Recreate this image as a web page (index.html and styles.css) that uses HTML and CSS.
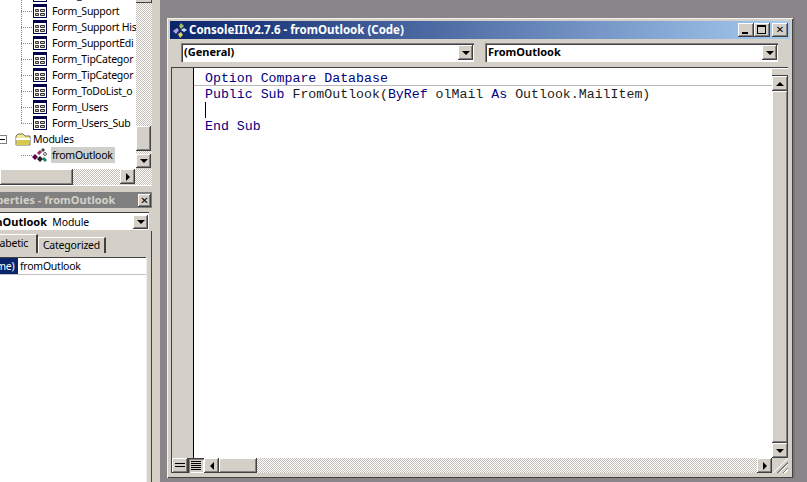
FILE: index.html
```html
<!DOCTYPE html>
<html lang="en">
<head>
<meta charset="utf-8">
<title>ConsoleIIIv2.7.6 - fromOutlook (Code)</title>
<link rel="stylesheet" href="styles.css">
</head>
<body>
<svg class="defs" width="0" height="0" aria-hidden="true">
  <symbol id="form" viewBox="0 0 14 14">
    <rect x="0.5" y="0.5" width="13" height="13" fill="#fff" stroke="#000048"/>
    <rect x="1" y="1" width="12" height="2" fill="#000048"/>
    <path d="M2.5 5.5h3v2h-3zM2.5 9.5h3v2h-3zM7.5 5.5h4v2h-4zM7.5 9.5h4v2h-4z" fill="#d4d0c8" stroke="#333" stroke-width="1"/>
  </symbol>
  <symbol id="module" viewBox="0 0 16 14">
    <path d="M0 9l3-3 3 3-3 3z" fill="#600050"/>
    <path d="M5 5l3-3 2 2-3 3z" fill="#a02070"/>
    <path d="M9 2l2-2 2 2-2 2z" fill="#404040"/>
    <path d="M5 11l3-3 3 3-3 3z" fill="#202020"/>
    <path d="M10 11l2-2 3 3-2 2z" fill="#208070"/>
    <path d="M11 6l2-2 2 2-2 2z" fill="#c0c0c0" stroke="#303030" stroke-width=".6"/>
  </symbol>
  <symbol id="folder" viewBox="0 0 16 13">
    <path d="M1 3l2-2h5l2 2h5v9H1z" fill="#f0e890" stroke="#707060"/>
    <path d="M1 5h14v2H1z" fill="#fff"/>
    <path d="M3 7h12l-1 5H1z" fill="#d8c850"/>
  </symbol>
  <symbol id="logo" viewBox="0 0 16 16">
    <path d="M9 1l3 3-3 3-2-3z" fill="#a0c060"/>
    <path d="M1 9l4-3 2 2-3 4z" fill="#b0a0e0"/>
    <path d="M9 8l3-2 3 2-3 2z" fill="#d0e0f0"/>
    <path d="M6 12l3-2 2 3-3 3z" fill="#d8d060"/>
  </symbol>
</svg>

<div class="desk">
  <aside class="side">
    <section class="project">
      <div class="tree-row-area">
        <div class="tree">
          <div class="spine"></div>
          <div class="row"><span class="hook"></span><svg class="ico"><use href="#form"/></svg><span class="lbl">Form_</span></div>
          <div class="row"><span class="hook"></span><svg class="ico"><use href="#form"/></svg><span class="lbl">Form_Support</span></div>
          <div class="row"><span class="hook"></span><svg class="ico"><use href="#form"/></svg><span class="lbl">Form_Support His</span></div>
          <div class="row"><span class="hook"></span><svg class="ico"><use href="#form"/></svg><span class="lbl">Form_SupportEdi</span></div>
          <div class="row"><span class="hook"></span><svg class="ico"><use href="#form"/></svg><span class="lbl">Form_TipCategor</span></div>
          <div class="row"><span class="hook"></span><svg class="ico"><use href="#form"/></svg><span class="lbl">Form_TipCategor</span></div>
          <div class="row"><span class="hook"></span><svg class="ico"><use href="#form"/></svg><span class="lbl">Form_ToDoList_o</span></div>
          <div class="row"><span class="hook"></span><svg class="ico"><use href="#form"/></svg><span class="lbl">Form_Users</span></div>
          <div class="row"><span class="hook"></span><svg class="ico"><use href="#form"/></svg><span class="lbl">Form_Users_Sub</span></div>
          <div class="row row-modules"><span class="minus"></span><svg class="ico-folder"><use href="#folder"/></svg><span class="lbl">Modules</span></div>
          <div class="row"><span class="hook"></span><svg class="ico-mod"><use href="#module"/></svg><span class="lbl sel">fromOutlook</span></div>
        </div>
        <div class="vbar">
          <div class="raised vtop"></div>
          <div class="dither grow"></div>
          <div class="raised vthumb"></div>
          <div class="dither gap"></div>
          <div class="raised sbtn"><span class="arr down"></span></div>
        </div>
      </div>
      <div class="hbar">
        <div class="raised hthumb"></div>
        <div class="dither grow"></div>
        <div class="raised sbtn"><span class="arr right"></span></div>
        <div class="dither hcorner"></div>
      </div>
    </section>

    <section class="props">
      <div class="ptitle"><span class="ptext">Properties - fromOutlook</span><span class="raised pclose">✕</span></div>
      <div class="pcombo"><span class="pcombo-text"><b>fromOutlook</b>&nbsp; Module</span><span class="raised sbtn"><span class="arr down"></span></span></div>
      <div class="pbody">
        <div class="tabs">
          <span class="tab active"><span class="tab-clip">Alphabetic</span></span>
          <span class="tab">Categorized</span>
        </div>
        <div class="grid">
          <div class="grow-row"><span class="gname"><span class="gname-text">(Name)</span></span><span class="gval">fromOutlook</span></div>
        </div>
      </div>
    </section>
  </aside>

  <main class="mdi">
    <div class="win">
      <header class="wtitle">
        <svg class="logo"><use href="#logo"/></svg>
        <span class="wtext">ConsoleIIIv2.7.6 - fromOutlook (Code)</span>
        <span class="wbtns">
          <span class="raised wbtn"><span class="g-min"></span></span>
          <span class="raised wbtn"><span class="g-max"></span></span>
          <span class="raised wbtn wclose">✕</span>
        </span>
      </header>
      <div class="combos">
        <div class="combo"><span class="ctext">(General)</span><span class="raised sbtn"><span class="arr down"></span></span></div>
        <div class="combo"><span class="ctext">FromOutlook</span><span class="raised sbtn"><span class="arr down"></span></span></div>
      </div>
      <div class="editor">
        <div class="upper">
          <div class="margin"></div>
          <div class="code">
            <div class="line sep"><span class="kw">Option Compare Database</span></div>
            <div class="line"><span class="kw">Public Sub</span> FromOutlook(<span class="kw">ByRef</span> olMail <span class="kw">As</span> Outlook.MailItem)</div>
            <div class="line"><span class="caret"></span></div>
            <div class="line"><span class="kw">End Sub</span></div>
          </div>
          <div class="vbar2">
            <div class="splitter"></div>
            <div class="raised sbtn2"><span class="arr up"></span></div>
            <div class="dither-plain grow"></div>
            <div class="raised sbtn2"><span class="arr down"></span></div>
          </div>
        </div>
        <div class="lower">
          <div class="raised view"><span class="g-lines short"></span></div>
          <div class="pressed view"><span class="g-lines"></span></div>
          <div class="raised sbtn3"><span class="arr left"></span></div>
          <div class="raised hthumb2"></div>
          <div class="dither grow"></div>
          <div class="raised sbtn3"><span class="arr right"></span></div>
          <div class="grip"></div>
        </div>
      </div>
    </div>
  </main>
</div>
</body>
</html>
```

FILE: styles.css
```css
* { box-sizing: border-box; }
html, body { margin: 0; padding: 0; width: 807px; height: 482px; overflow: hidden; }
body { background: #d4d0c8; font: 11px "Noto Sans", "Liberation Sans", Arial, sans-serif; color: #000; }
.defs { position: absolute; }

.raised {
  background: #d4d0c8;
  box-shadow: inset -1px -1px #404040, inset 1px 1px #fff, inset -2px -2px #808080, inset 2px 2px #d4d0c8;
}
.pressed {
  background: #d4d0c8;
  box-shadow: inset 1px 1px #404040, inset 2px 2px #808080, inset -1px -1px #fff;
}
.dither {
  background-color: #fff;
  background-image: conic-gradient(#c4c0b8 25%, #fff 0 50%, #c4c0b8 0 75%, #fff 0);
  background-size: 2px 2px;
}
.dither-plain { background: #d4d0c8; }
.grow { flex: 1 1 0; min-width: 0; min-height: 0; }

.arr { width: 0; height: 0; border-style: solid; border-color: transparent; display: block; }
.arr.down { border-width: 4px 4px 0; border-top-color: #000; }
.arr.up { border-width: 0 4px 4px; border-bottom-color: #000; }
.arr.left { border-width: 4px 4px 4px 0; border-right-color: #000; }
.arr.right { border-width: 4px 0 4px 4px; border-left-color: #000; }

.desk { display: flex; width: 807px; height: 482px; }

/* Left column */
.side { width: 160px; flex: none; padding-right: 8px; background: #d4d0c8; display: flex; flex-direction: column; }
.project { height: 186px; flex: none; display: flex; flex-direction: column; border-bottom: 1px solid #fff; }
.tree-row-area { height: 169px; flex: none; display: flex; background: #d4d0c8; overflow: hidden; }
.tree { width: 136px; height: 182px; flex: none; position: relative; overflow: hidden; background: #fff; margin-top: -13px; font-size: 10.5px; letter-spacing: -.25px; }
.spine { position: absolute; left: 21px; top: 0; height: 136px; border-left: 1px dotted #808080; }
.row { height: 16px; display: flex; align-items: center; position: relative; white-space: nowrap; padding-left: 21px; }
.hook { width: 11px; flex: none; border-top: 1px dotted #808080; }
.ico { width: 14px; height: 14px; margin-left: 1px; margin-right: 5px; flex: none; }
.ico-mod { width: 16px; height: 14px; flex: none; margin-right: 3px; }
.ico-folder { width: 16px; height: 13px; flex: none; margin-right: 2px; }
.lbl { display: block; line-height: 16px; }
.sel { background: #cfcfcb; padding: 0 2px 0 1px; height: 16px; }
.row-modules { padding-left: 0; }
.minus { width: 7px; height: 9px; flex: none; border: 1px solid #808080; border-left: 0; margin-right: 8px; position: relative; }
.minus::after { content: ""; position: absolute; left: 0; right: 1px; top: 3px; border-top: 1px solid #000; }

.vbar { width: 16px; height: 168px; flex: none; display: flex; flex-direction: column; }
.vtop { height: 3px; flex: none; box-shadow: inset -1px -1px #404040; }
.vthumb { height: 25px; width: 15px; flex: none; }
.vbar .gap { height: 3px; flex: none; }
.vbar .sbtn { height: 14px; }
.sbtn { width: 15px; height: 14px; display: flex; align-items: center; justify-content: center; flex: none; }
.hbar { height: 16px; flex: none; display: flex; background: #d4d0c8; }
.hthumb { width: 73px; flex: none; }
.hcorner { width: 17px; flex: none; }
.hbar .sbtn { height: 15px; }

/* Properties */
.props { display: flex; flex-direction: column; flex: 1; min-height: 0; }
.ptitle { margin-top: 6px; height: 16px; background: #808080; color: #d4d0c8; font-weight: 700; font-size: 11px; line-height: 15px; display: flex; justify-content: space-between; align-items: center; width: 152px; overflow: hidden; padding-right: 1px; }
.ptext { margin-left: -22px; white-space: nowrap; padding-bottom: 1px; }
.pclose { width: 13px; height: 13px; flex: none; font-size: 10px; line-height: 13px; text-align: center; color: #000; font-weight: 700; font-family: "DejaVu Sans", sans-serif; }
.pcombo { margin-top: 4px; height: 19px; width: 149px; background: #fff; display: flex; justify-content: space-between; align-items: center; padding-right: 1px; overflow: hidden; box-shadow: inset 0 1px #404040, inset 0 -1px #d4d0c8; }
.pcombo-text { margin-left: -24px; white-space: nowrap; font-size: 10.5px; letter-spacing: -.1px; }
.pcombo-text b { font-size: 11px; letter-spacing: 0; }
.pbody { flex: 1; min-height: 0; display: flex; flex-direction: column; width: 152px; border-right: 1px solid #404040; }
.tabs { height: 26px; flex: none; display: flex; align-items: flex-end; padding-bottom: 4px; }
.tab { height: 16px; width: 68px; flex: none; text-align: center; line-height: 14px; border: 1px solid #808080; border-bottom: 0; border-left-color: #fff; border-top-color: #fff; border-right: 2px solid #404040; font-size: 10.5px; letter-spacing: -.2px; }
.tab.active { height: 19px; width: 38px; line-height: 17px; overflow: hidden; border-left: 0; text-align: left; }
.tab-clip { margin-left: -22px; white-space: nowrap; display: block; }
.grid { width: 147px; flex: 1; min-height: 0; background: #fff; box-shadow: inset 0 1px #404040; border-right: 1px solid #f0f0f0; overflow: hidden; }
.grow-row { display: flex; height: 17px; margin-top: 1px; align-items: stretch; font-size: 10.5px; letter-spacing: -.25px; border-bottom: 1px solid #c0c0c0; }
.gname { width: 18px; flex: none; background: #0a246a; color: #fff; overflow: hidden; line-height: 16px; }
.gname-text { display: block; margin-left: -20px; white-space: nowrap; }
.gval { padding-left: 2px; line-height: 16px; }

/* MDI */
.mdi { flex: 1; background: #8a8589; position: relative; }
.win { position: absolute; left: 7px; top: 18px; width: 626px; height: 460px; background: #d4d0c8; padding: 3px; display: flex; flex-direction: column; box-shadow: inset 1px 1px #f4f2ee, inset -1px -1px #404040, 2px 0 0 #77747a; }
.wtitle { height: 18px; flex: none; display: flex; align-items: center; background: linear-gradient(90deg, #0a246a, #a6caf0); color: #fff; font-weight: 700; font-size: 11.5px; padding: 0 2px; }
.logo { width: 16px; height: 16px; flex: none; margin-right: 1px; }
.wtext { flex: 1; white-space: nowrap; padding-bottom: 1px; }
.wbtns { display: flex; }
.wbtn { width: 16px; height: 14px; position: relative; color: #000; font-size: 10px; line-height: 14px; text-align: center; font-family: "DejaVu Sans", sans-serif; }
.wbtn.wclose { margin-left: 2px; font-weight: 700; }
.g-min { position: absolute; left: 4px; bottom: 3px; width: 6px; height: 2px; background: #000; }
.g-max { position: absolute; left: 3px; top: 2px; width: 9px; height: 9px; border: 1px solid #000; border-top-width: 2px; }

.combos { display: flex; height: 28px; flex: none; padding: 4px 9px 5px 11px; gap: 11px; }
.combo { width: 293px; height: 19px; flex: none; background: #fff; display: flex; align-items: center; justify-content: space-between; padding: 2px 1px 2px 2px; box-shadow: inset 1px 1px #808080, inset 2px 2px #404040, inset -1px -1px #fff; font-weight: 700; font-size: 11px; }
.ctext { margin-left: 1px; white-space: nowrap; padding-bottom: 2px; }
.combo .sbtn { height: 15px; }

.editor { flex: 1; min-height: 0; display: flex; flex-direction: column; margin: 0 2px 2px 1px; box-shadow: inset 1px 1px #404040; }
.upper { flex: 1; min-height: 0; display: flex; padding-top: 1px; }
.margin { width: 21px; flex: none; background: #d4d0c8; margin-left: 1px; }
.code { flex: 1; min-width: 0; background: #fff; border-left: 1px solid #000; font: 13.25px/18px "Liberation Mono", "Courier New", monospace; color: #1c1c1c; padding-top: 2px; }
.line { height: 16px; padding-left: 11px; white-space: pre; }
.line.sep { border-bottom: 1px solid #b8b8b8; }
.kw { color: #000080; }
.caret { display: block; width: 1px; height: 16px; background: #000; }
.vbar2 { width: 16px; flex: none; display: flex; flex-direction: column; background: #d4d0c8; }
.splitter { height: 8px; flex: none; background: #d4d0c8; box-shadow: inset 0 -1px #404040, inset 0 1px #fff; }
.sbtn2 { height: 15px; width: 16px; flex: none; display: flex; align-items: center; justify-content: center; }
.vbar2 .dither-plain { box-shadow: inset -1px -1px #404040, inset 1px 1px #fff, inset -2px -2px #808080; }

.lower { height: 15px; flex: none; display: flex; padding-left: 1px; }
.view { width: 16px; flex: none; display: flex; align-items: center; justify-content: center; }
.g-lines { display: block; width: 10px; height: 9px; background: repeating-linear-gradient(#000 0 1px, transparent 1px 2px); }
.g-lines.short { height: 5px; background: repeating-linear-gradient(#000 0 1px, transparent 1px 3px); }
.sbtn3 { width: 15px; flex: none; display: flex; align-items: center; justify-content: center; }
.hthumb2 { width: 38px; flex: none; }
.grip { width: 16px; flex: none; background: linear-gradient(135deg, #d4d0c8 50%, transparent 50%), repeating-linear-gradient(135deg, #d4d0c8 0 2px, #808080 2px 3px, #fff 3px 4px); }
```
